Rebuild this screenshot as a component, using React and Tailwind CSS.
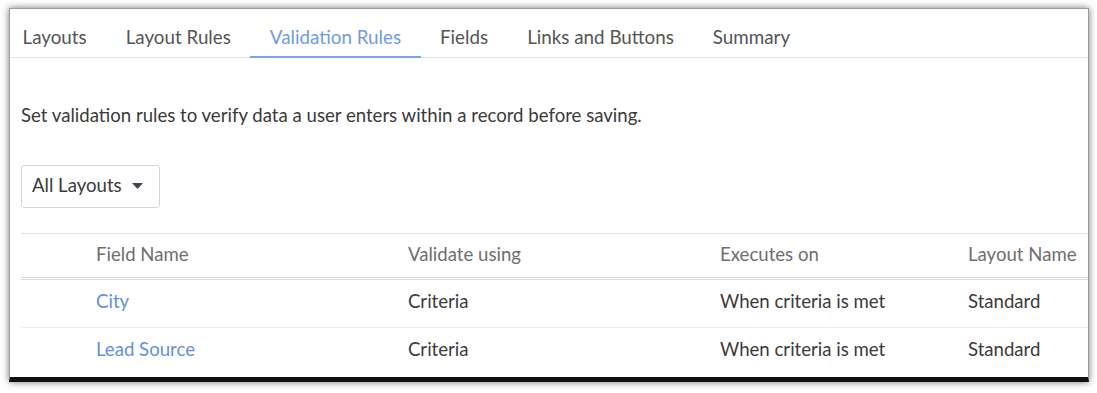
const tabs = ['Layouts', 'Layout Rules', 'Validation Rules', 'Fields', 'Links and Buttons', 'Summary']

const rows = [
  { field: 'City', using: 'Criteria', on: 'When criteria is met', layout: 'Standard' },
  { field: 'Lead Source', using: 'Criteria', on: 'When criteria is met', layout: 'Standard' },
]

function App() {
  return (
    <div className="h-[393px] w-[1097px] overflow-hidden bg-white pl-[9px] pt-[8px]" style={{ fontFamily: 'Lato, "Open Sans", sans-serif' }}>
      <div className="h-[374px] w-[1080px] overflow-hidden border border-b-[5px] border-[#9c9c9c] border-b-[#111] bg-white shadow-[0_0_7px_rgba(0,0,0,0.55)]">
        <nav className="flex h-[49px] border-b border-[#e4e4e4]">
          {tabs.map((t, i) => (
            <button
              key={t}
              className={`-mb-px flex items-center px-[19.5px] pt-[9px] text-[18.8px] ${i === 0 ? 'pl-[12.5px]' : ''} ${
                t === 'Validation Rules' ? 'border-b-2 border-[#7aa3ea] text-[#6f9be6]' : 'border-b-2 border-transparent text-[#545454]'
              }`}
            >
              {t}
            </button>
          ))}
        </nav>

        <p className="mt-[44px] pl-[11px] text-[18.6px] text-[#3a3a3a]">
          Set validation rules to verify data a user enters within a record before saving.
        </p>

        <div className="mt-[35px] pl-[11px]">
          <button className="flex h-[43px] w-[139px] items-center rounded-[3px] border border-[#d6d6d6] pl-[10px] text-[18.6px] text-[#3a3a3a]">
            All Layouts
            <svg className="ml-[10px]" width="11" height="6" viewBox="0 0 11 6">
              <path d="M0 0h11L5.5 6z" fill="#3d4652" />
            </svg>
          </button>
        </div>

        <div className="ml-[11px] mt-[25px] border-t border-[#e2e2e2]">
          <div className="grid h-[46px] grid-cols-[75px_312px_312px_248px_1fr] items-center border-b-[3px] border-double border-[#dcdcdc] text-[18.6px] text-[#6e6e6e]">
            <div />
            <div>Field Name</div>
            <div>Validate using</div>
            <div>Executes on</div>
            <div className="whitespace-nowrap">Layout Name</div>
          </div>
          {rows.map((r, i) => (
            <div
              key={r.field}
              className={`grid h-[48px] grid-cols-[75px_312px_312px_248px_1fr] items-center pb-[3px] text-[18.6px] text-[#3a3a3a] ${i === 0 ? 'border-b border-[#ededed]' : ''}`}
            >
              <div />
              <div className="text-[#5f8fe3]">{r.field}</div>
              <div>{r.using}</div>
              <div className="whitespace-nowrap">{r.on}</div>
              <div>{r.layout}</div>
            </div>
          ))}
        </div>
      </div>
    </div>
  )
}

export default App
